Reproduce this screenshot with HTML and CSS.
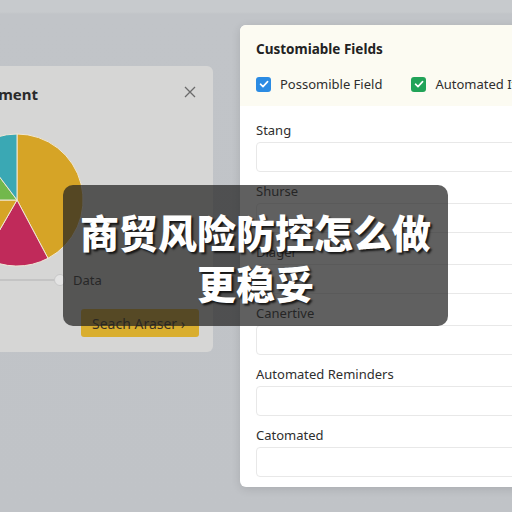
FILE: index.html
```html
<!DOCTYPE html>
<html lang="zh">
<head>
<meta charset="utf-8">
<title>商贸风险防控</title>
<link rel="stylesheet" href="styles.css">
</head>
<body>
<div class="desk">
  <section class="panel panel-left">
    <header class="pl-head">
      <h2 class="pl-title">Risk Assessment</h2>
      <svg class="close" width="12" height="12" viewBox="0 0 12 12"><path d="M1 1L11 11M11 1L1 11" stroke="#6b6b6b" stroke-width="1.3" fill="none"/></svg>
    </header>
    <svg class="pie" width="134" height="134" viewBox="0 0 134 134">
      <g stroke="#efe7d6" stroke-width="1" stroke-linejoin="round">
        <path d="M67 67L67 1A66 66 0 0 1 98 125.3Z" fill="#d6a426"/>
        <path d="M67 67L98 125.3A66 66 0 0 1 34 124.2Z" fill="#c02a5a"/>
        <path d="M67 67L34 124.2A66 66 0 0 1 1 67Z" fill="#d6a426"/>
        <path d="M67 67L1 67A66 66 0 0 1 27.3 14.3Z" fill="#72b84c"/>
        <path d="M67 67L27.3 14.3A66 66 0 0 1 67 1Z" fill="#3aa8b4"/>
      </g>
    </svg>
    <div class="slider-row">
      <span class="track"></span>
      <span class="thumb"></span>
      <span class="slider-label">Data</span>
    </div>
    <button class="btn-yellow">Seach Araser ›</button>
  </section>

  <section class="panel panel-right">
    <header class="pr-head">
      <h2 class="pr-title">Customiable Fields</h2>
      <div class="checks">
        <label class="check"><span class="box box-blue"><svg width="10" height="10" viewBox="0 0 10 10"><path d="M1.5 5.2L4 7.6L8.6 2.6" stroke="#fff" stroke-width="1.6" fill="none" stroke-linecap="round" stroke-linejoin="round"/></svg></span>Possomible Field</label>
        <label class="check"><span class="box box-green"><svg width="10" height="10" viewBox="0 0 10 10"><path d="M1.5 5.2L4 7.6L8.6 2.6" stroke="#fff" stroke-width="1.6" fill="none" stroke-linecap="round" stroke-linejoin="round"/></svg></span>Automated Items</label>
      </div>
    </header>
    <div class="fields">
      <div class="field"><span class="f-label">Stang</span><span class="f-input"></span></div>
      <div class="field"><span class="f-label">Shurse</span><span class="f-input"></span></div>
      <div class="field"><span class="f-label">Diager</span><span class="f-input"></span></div>
      <div class="field"><span class="f-label">Canertive</span><span class="f-input"></span></div>
      <div class="field"><span class="f-label">Automated Reminders</span><span class="f-input"></span></div>
      <div class="field"><span class="f-label">Catomated</span><span class="f-input"></span></div>
    </div>
  </section>

  <div class="caption">
    <p>商贸风险防控怎么做</p>
    <p>更稳妥</p>
  </div>
</div>
</body>
</html>
```

FILE: styles.css
```css
* { box-sizing: border-box; }

html, body {
  margin: 0;
  padding: 0;
}

body {
  width: 512px;
  height: 512px;
  overflow: hidden;
  font-family: "Noto Sans", "Liberation Sans", sans-serif;
  color: #2b2b2b;
}

.desk {
  position: relative;
  width: 512px;
  height: 512px;
  overflow: hidden;
  background: linear-gradient(#c7cacd 0, #c7cacd 12px, #c1c4c8 14px, #c0c3c7 100%);
}

.panel {
  position: absolute;
  border-radius: 6px;
}

/* chart window on the left */
.panel-left {
  left: -60px;
  top: 66px;
  width: 273px;
  height: 286px;
  background: #d6d6d5;
  padding: 18px 17px 0 16px;
}

.pl-head {
  display: flex;
  align-items: center;
  justify-content: space-between;
  height: 20px;
}

.pl-title {
  margin: 0;
  width: 82px;
  text-align: right;
  white-space: nowrap;
  direction: rtl;
  overflow: visible;
  font-size: 15px;
  font-weight: 700;
  color: #2a2a2a;
}

.close { display: block; margin-top: -5px; }

.pie {
  display: block;
  margin: 29px 0 0 -6px;
}

.slider-row {
  display: flex;
  align-items: center;
  height: 14px;
  margin-top: 6px;
}

.track {
  width: 98px;
  height: 2px;
  background: #c4c4c4;
}

.thumb {
  width: 12px;
  height: 12px;
  border-radius: 50%;
  background: #e4e4e4;
  border: 1px solid #c8c8c8;
}

.slider-label {
  margin-left: 7px;
  font-size: 13px;
  color: #333;
}

.btn-yellow {
  display: block;
  margin: 22px 0 0 125px;
  width: 118px;
  height: 28px;
  border: 0;
  border-radius: 3px;
  background: #d9ae2e;
  font-family: inherit;
  font-size: 14px;
  color: #3a3222;
  text-align: left;
  padding: 0 11px;
}

/* form window on the right */
.panel-right {
  left: 240px;
  top: 25px;
  width: 300px;
  height: 462px;
  background: #fff;
  box-shadow: 0 2px 10px rgba(0, 0, 0, 0.12);
  overflow: hidden;
}

.pr-head {
  background: #fcfbf2;
  padding: 14px 16px 12px;
}

.pr-title {
  margin: 0;
  font-size: 13.5px;
  line-height: 20px;
  font-weight: 700;
  color: #222;
}

.checks {
  display: flex;
  gap: 29px;
  margin-top: 15px;
  height: 20px;
  align-items: center;
}

.check {
  display: flex;
  align-items: center;
  gap: 9px;
  font-size: 13px;
  color: #2e2e2e;
  white-space: nowrap;
}

.box {
  width: 15px;
  height: 15px;
  border-radius: 3px;
  display: flex;
  align-items: center;
  justify-content: center;
}

.box-blue { background: #2b8be3; }
.box-green { background: #21a358; }

.fields {
  padding: 15px 0 0 16px;
}

.field {
  display: flex;
  flex-direction: column;
  margin-bottom: 10px;
}

.f-label {
  font-size: 13px;
  line-height: 18px;
  color: #2e2e2e;
}

.f-input {
  margin-top: 3px;
  height: 30px;
  border: 1px solid #e8e8e8;
  border-radius: 4px;
  background: #fff;
}

/* headline overlay */
.caption {
  position: absolute;
  left: 63px;
  top: 185px;
  width: 385px;
  height: 141px;
  border-radius: 10px;
  background: rgba(35, 35, 35, 0.72);
  padding-top: 21px;
  text-align: center;
}

.caption p {
  margin: 0;
  font-family: "Noto Sans CJK SC", "Noto Sans", sans-serif;
  font-weight: 900;
  font-size: 39px;
  line-height: 51px;
  color: #fff;
  text-shadow: 2px 2px 2px rgba(0, 0, 0, 0.75);
}
```
